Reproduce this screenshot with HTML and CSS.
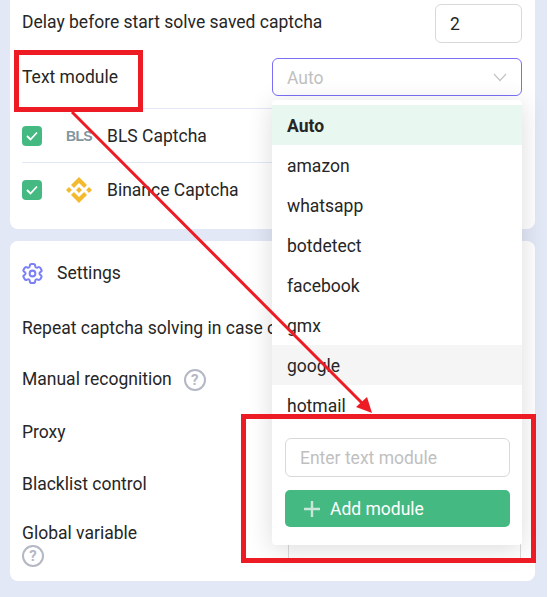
FILE: index.html
```html
<!DOCTYPE html>
<html lang="en">

<head>
    <meta charset="UTF-8">
    <meta name="viewport" content="width=device-width, initial-scale=1.0">
    <title>Text module</title>
    <link rel="stylesheet" href="styles.css">
</head>

<body>
    <main class="page">
        <section class="card card-top">
            <div class="row row-delay">
                <span class="delay-label">Delay before start solve saved captcha</span>
                <div class="number-box">2</div>
            </div>
            <div class="row row-module">
                <span>Text module</span>
                <div class="select-wrap">
                    <div class="select">
                        <span class="select-value">Auto</span>
                        <svg class="chevron" width="14" height="9" viewBox="0 0 14 9">
                            <path d="M1 1l6 6.5L13 1" fill="none" stroke="#c4c4c4" stroke-width="1.2" />
                        </svg>
                    </div>
                    <div class="dropdown">
                        <ul class="options">
                            <li class="option option-active">Auto</li>
                            <li class="option">amazon</li>
                            <li class="option">whatsapp</li>
                            <li class="option">botdetect</li>
                            <li class="option">facebook</li>
                            <li class="option">gmx</li>
                            <li class="option option-hover">google</li>
                            <li class="option">hotmail</li>
                        </ul>
                        <div class="add-form">
                            <div class="text-input">Enter text module</div>
                            <div class="add-btn">
                                <svg width="16" height="16" viewBox="0 0 16 16">
                                    <path d="M8 0v16M0 8h16" stroke="#c9e6d8" stroke-width="2.4" />
                                </svg>
                                <span>Add module</span>
                            </div>
                        </div>
                    </div>
                </div>
            </div>
            <div class="captcha">
                <span class="check">
                    <svg width="12" height="10" viewBox="0 0 12 10">
                        <path d="M1 5l3.5 3.5L11 1.5" fill="none" stroke="#fff" stroke-width="1.8" />
                    </svg>
                </span>
                <span class="logo logo-bls">BLS</span>
                <span>BLS Captcha</span>
            </div>
            <div class="captcha">
                <span class="check">
                    <svg width="12" height="10" viewBox="0 0 12 10">
                        <path d="M1 5l3.5 3.5L11 1.5" fill="none" stroke="#fff" stroke-width="1.8" />
                    </svg>
                </span>
                <span class="logo">
                    <svg width="26" height="26" viewBox="0 0 126.61 126.61" fill="#f3ba2f">
                        <path d="M38.73 53.2l24.59-24.58 24.6 24.6 14.3-14.31L63.32 0 24.42 38.9z" />
                        <path d="M0 63.31l14.3-14.31 14.31 14.31-14.31 14.3z" />
                        <path d="M38.73 73.41l24.59 24.59 24.6-24.6 14.31 14.29-38.9 38.91-38.91-38.88z" />
                        <path d="M98 63.31l14.3-14.31 14.31 14.3-14.31 14.32z" />
                        <path d="M77.83 63.3L63.32 48.78 52.59 59.51l-1.24 1.23-2.54 2.54 14.51 14.5 14.51-14.52z" />
                    </svg>
                </span>
                <span>Binance Captcha</span>
            </div>
        </section>

        <section class="card card-settings">
            <h2 class="settings-title">
                <svg class="gear" width="23" height="23" viewBox="0 0 24 24" fill="none" stroke="#7c80f7" stroke-width="2.1">
                    <g transform="rotate(90 12 12)">
                        <path d="M12 15a3 3 0 1 0 0-6 3 3 0 0 0 0 6Z" />
                        <path d="M2 12.88v-1.76c0-1.04.85-1.9 1.9-1.9 1.81 0 2.55-1.28 1.64-2.85-.52-.9-.21-2.07.7-2.59l1.73-.99c.79-.47 1.81-.19 2.28.6l.11.19c.9 1.57 2.38 1.57 3.29 0l.11-.19c.47-.79 1.49-1.07 2.28-.6l1.73.99c.91.52 1.22 1.69.7 2.59-.91 1.57-.17 2.85 1.64 2.85 1.04 0 1.9.85 1.9 1.9v1.76c0 1.04-.85 1.9-1.9 1.9-1.81 0-2.55 1.28-1.64 2.85.52.91.21 2.07-.7 2.59l-1.73.99c-.79.47-1.81.19-2.28-.6l-.11-.19c-.9-1.57-2.38-1.57-3.29 0l-.11.19c-.47.79-1.49 1.07-2.28.6l-1.73-.99a1.9 1.9 0 0 1-.7-2.59c.91-1.57.17-2.85-1.64-2.85-1.05 0-1.9-.86-1.9-1.9Z" />
                    </g>
                </svg>
                <span>Settings</span>
            </h2>
            <div class="setting">Repeat captcha solving in case of</div>
            <div class="setting setting-manual">
                <span>Manual recognition</span>
                <span class="help">?</span>
            </div>
            <div class="setting">Proxy</div>
            <div class="setting">Blacklist control</div>
            <div class="setting-global">
                <div class="global-label">
                    <span>Global variable</span>
                    <span class="help">?</span>
                </div>
                <div class="global-field"></div>
            </div>
        </section>
    </main>

    <!-- annotations drawn on top of the screenshot -->
    <svg class="marks" width="548" height="597" viewBox="0 0 548 597">
        <rect x="16.5" y="52.5" width="124" height="57" fill="none" stroke="#ed1c24" stroke-width="5" />
        <rect x="243.5" y="416.5" width="290" height="144" fill="none" stroke="#ed1c24" stroke-width="5" />
        <path d="M72 112L364 405" stroke="#ed1c24" stroke-width="3" />
        <path d="M372 413L356 407L367 397z" fill="#ed1c24" />
    </svg>
</body>

</html>
```

FILE: styles.css
```css
* {
    box-sizing: border-box;
}

html,
body {
    margin: 0;
    height: 597px;
    overflow: hidden;
    background-color: #fff;
}

body {
    position: relative;
    font-family: Roboto, "Liberation Sans", sans-serif;
    font-size: 17.5px;
    color: #262626;
}

.page {
    width: 547px;
    height: 597px;
    padding: 0 12px 16px 10px;
    background-color: #e3e8f7;
    display: flex;
    flex-direction: column;
    gap: 12px;
}

.card {
    background-color: #fff;
    padding: 0 13px 0 12px;
}

.card-top {
    height: 229px;
    border-radius: 0 0 8px 8px;
}

.card-settings {
    height: 340px;
    border-radius: 8px;
    white-space: nowrap;
}

.row {
    display: flex;
    justify-content: space-between;
    align-items: center;
}

.row-delay {
    height: 47px;
}

.delay-label {
    padding-bottom: 3px;
}

.row-module {
    height: 62px;
    padding-top: 11px;
    padding-bottom: 12px;
    align-items: flex-start;
    line-height: 38px;
    border-bottom: 1px solid #e3e8f7;
}

.number-box {
    width: 87px;
    height: 39px;
    border: 1px solid #d9d9d9;
    border-radius: 6px;
    padding-left: 14px;
    line-height: 39px;
}

.select-wrap {
    position: relative;
    width: 250px;
}

.select {
    height: 38px;
    border: 1px solid #7b6ff5;
    border-radius: 6px;
    padding: 0 14px;
    display: flex;
    justify-content: space-between;
    align-items: center;
    color: #bfbfbf;
}

.select-value {
    line-height: 38px;
    padding-top: 1px;
}

.dropdown {
    position: absolute;
    top: 42px;
    left: 0;
    width: 250px;
    height: 445px;
    padding-top: 5px;
    background-color: #fff;
    border-radius: 4px;
    box-shadow: 0 4px 26px rgba(0, 0, 0, 0.14);
}

.options {
    list-style: none;
    margin: 0;
    padding: 0;
    height: 320px;
    overflow: hidden;
}

.option {
    height: 40px;
    line-height: 43px;
    padding-left: 15px;
}

.option-active {
    background-color: #e8f7ef;
    font-weight: 700;
}

.option-hover {
    background-color: #f5f5f5;
}

.add-form {
    padding: 13px 12px 0 13px;
}

.text-input {
    height: 39px;
    border: 1px solid #d9d9d9;
    border-radius: 6px;
    padding-left: 14px;
    line-height: 39px;
    color: #bfbfbf;
}

.add-btn {
    height: 37px;
    margin-top: 13px;
    padding-left: 19px;
    border-radius: 5px;
    background-color: #45b982;
    color: #fff;
    display: flex;
    align-items: center;
    gap: 10px;
}

.captcha {
    height: 54px;
    display: flex;
    align-items: center;
    border-bottom: 1px solid #e3e8f7;
}

.captcha:last-child {
    border-bottom: 0;
}

.check {
    width: 20px;
    height: 20px;
    border-radius: 4px;
    background-color: #45b982;
    display: flex;
    align-items: center;
    justify-content: center;
}

.logo {
    width: 26px;
    margin: 0 15px 0 24px;
    display: flex;
    align-items: center;
    justify-content: center;
}

.logo-bls {
    font-family: "Liberation Sans", sans-serif;
    font-size: 14px;
    font-weight: 700;
    letter-spacing: -0.7px;
    color: #8296a1;
}

.settings-title {
    margin: 0;
    height: 60px;
    padding-top: 4px;
    font-size: 17.5px;
    font-weight: 400;
    display: flex;
    align-items: center;
    gap: 13px;
}

.gear {
    margin-left: -1px;
}

.setting {
    height: 52px;
    width: 250px;
    padding-top: 2px;
    overflow: hidden;
    display: flex;
    align-items: center;
    gap: 12px;
}

.setting-manual {
    padding-top: 0;
}

.setting-manual .help {
    margin-top: 2px;
}

.help {
    flex-shrink: 0;
    width: 22px;
    height: 22px;
    border: 2px solid #b4b8c4;
    border-radius: 50%;
    color: #b4b8c4;
    font-size: 15px;
    font-weight: 700;
    line-height: 18px;
    text-align: center;
}

.setting-global {
    display: flex;
    justify-content: space-between;
    padding-top: 14px;
}

.global-label {
    display: flex;
    flex-direction: column;
    align-items: flex-start;
    gap: 2px;
}

.global-field {
    width: 233px;
    height: 38px;
    margin-right: 1px;
    border: 1px solid #d9d9d9;
}

.marks {
    position: absolute;
    top: 0;
    left: 0;
    pointer-events: none;
}
```
